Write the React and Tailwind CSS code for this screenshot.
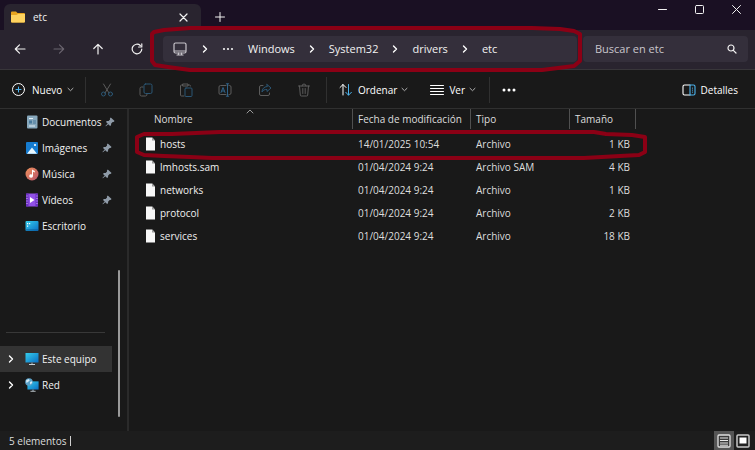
import React from "react";

const line = { fill: "none", stroke: "currentColor", strokeLinecap: "round", strokeLinejoin: "round" };

function Icon({ children, className = "size-[14px]", box = "0 0 14 14", width = 1 }) {
  return (
    <svg aria-hidden="true" viewBox={box} className={`shrink-0 ${className}`} {...line} strokeWidth={width}>
      {children}
    </svg>
  );
}

const Chevron = () => (
  <Icon className="size-[8px] text-white" box="0 0 8 8" width={1.4}>
    <path d="M2.5 1 5.5 4 2.5 7" />
  </Icon>
);
const Down = () => (
  <Icon className="size-[7px] text-[#b0b0b0]" box="0 0 7 7">
    <path d="M1 2.3 3.5 4.7 6 2.3" />
  </Icon>
);
const Pin = () => (
  <svg aria-hidden="true" viewBox="0 0 10 10" className="size-[10px] shrink-0 text-[#8f9ba8]">
    <path d="M5.8.4 9.6 4 8.5 5 7.7 4.9 6.2 6.5 6 8.3 5.1 9 3.3 7.2.9 9.3.4 8.9 2.7 6.6 1 4.9 1.8 4.1 3.6 4 5.1 2.4 4.9 1.4Z" fill="currentColor" />
  </svg>
);
const Separator = () => <span className="h-[26px] w-px shrink-0 bg-[#303030]" />;

const MonitorShape = () => (
  <>
    <path d="M0.5 1h13v9.500H0.5z" fill="url(#screen)" />
    <path d="M6 10.500h2v2H6z" fill="#6b7780" />
    <path d="M4 12h6v1H4z" fill="#c8d0d6" />
  </>
);

function PlaceIcon({ kind }) {
  return (
    <svg aria-hidden="true" viewBox="0 0 14 14" className="size-[14px] shrink-0">
      <defs>
        <linearGradient id="screen" x1="0" y1="0" x2="1" y2="1">
          <stop offset="0" stopColor="#35cdec" />
          <stop offset="1" stopColor="#0a6fc4" />
        </linearGradient>
        <linearGradient id="music" x1="0" y1="0" x2="1" y2="1">
          <stop offset="0" stopColor="#f0925a" />
          <stop offset="1" stopColor="#b8546c" />
        </linearGradient>
      </defs>
      {kind === "doc" && (
        <>
          <rect x="2" y="0.5" width="10.5" height="13" rx="1" fill="#88a9bd" />
          <path d="M4 3h4v1H4zM4 10.500h6v1H4z" fill="#e3f0f7" />
          <path d="M4 5.500h3v3H4zM8 5.500h3v1H8zM8 7.500h3v1H8z" fill="#47799c" />
        </>
      )}
      {kind === "img" && (
        <>
          <rect x="1" y="1" width="12" height="12" rx="1" fill="#167cd0" />
          <path d="M2 12.800 7 6.500l5 6.300Z" fill="#e9f8ff" />
          <circle cx="10" cy="4" r="1.100" fill="#fff" />
        </>
      )}
      {kind === "music" && (
        <>
          <circle cx="7" cy="7" r="6.500" fill="url(#music)" />
          <path d="M7 2.500 9.800 4v1.500L8 4.800V9a1.900 1.700 0 1 1-1-1.500Z" fill="#fff" />
        </>
      )}
      {kind === "video" && (
        <>
          <rect x="1" y="0.500" width="12" height="13" rx="1" fill="#9150e6" />
          <path d="M1 .5h2.500v13H1zM10.500 .5H13v13h-2.500z" fill="#6a2fc0" />
          <path d="M1.500 3h1M1.500 5.500h1M1.500 8h1M1.500 10.500h1M11.500 3h1M11.500 5.500h1M11.500 8h1M11.500 10.500h1" stroke="#d4b8f8" />
          <path d="M5 4 9.500 7 5 10Z" fill="#fff" />
        </>
      )}
      {kind === "desktop" && (
        <>
          <rect x="0.500" y="2" width="13" height="10" rx="1" fill="url(#screen)" />
          <path d="M2 4h1.200v1.200H2zM4 4h1.200v1.200H4zM2 6.500h1.200v1.200H2z" fill="#fff" />
          <path d="M1 10.500h12v1H1z" fill="#0b5c99" />
        </>
      )}
      {kind === "pc" && <MonitorShape />}
      {kind === "net" && (
        <>
          <g transform="translate(2 2.500) scale(.86)">
            <MonitorShape />
          </g>
          <circle cx="4" cy="4" r="3.800" fill="#5aa0c8" />
          <path d="M1 2.500 3.500 1l1.300 1.300-1.500 1.500L1.500 5ZM5 4l2-.8.2 1.800L5.200 6.500Z" fill="#d5ebf5" />
        </>
      )}
    </svg>
  );
}

const FileIcon = () => (
  <svg aria-hidden="true" viewBox="0 0 11 14" className="h-[14px] w-[11px] shrink-0">
    <path d="M1 .5h6.200L10 3.400V13.500H1Z" fill="#f7f7f7" />
    <path d="M7 .5V3.600h3Z" fill="#9a9a9a" />
  </svg>
);

const places = [
  ["doc", "Documentos", true],
  ["img", "Imágenes", true],
  ["music", "Música", true],
  ["video", "Vídeos", true],
  ["desktop", "Escritorio", false],
];

const files = [
  ["hosts", "14/01/2025 10:54", "Archivo", "1 KB"],
  ["lmhosts.sam", "01/04/2024 9:24", "Archivo SAM", "4 KB"],
  ["networks", "01/04/2024 9:24", "Archivo", "1 KB"],
  ["protocol", "01/04/2024 9:24", "Archivo", "2 KB"],
  ["services", "01/04/2024 9:24", "Archivo", "18 KB"],
];

const tools = [
  ["Cortar", <><path d="M3.500 1 9 10M10.500 1 5 10" /><g stroke="#2b5674"><circle cx="3.500" cy="11" r="2" /><circle cx="10.500" cy="11" r="2" /></g></>],
  ["Copiar", <><path d="M4 4H2.500A1.500 1.500 0 0 0 1 5.500v6A1.500 1.500 0 0 0 2.500 13h4A1.500 1.500 0 0 0 8 11.500" /><rect x="5" y="1" width="8" height="9.500" rx="1.500" stroke="#2b5674" /></>],
  ["Pegar", <><path d="M5 13H2.500A1 1 0 0 1 1.500 12V3a1 1 0 0 1 1-1H4M9 2h1.500a1 1 0 0 1 1 1M4 1h5v2H4z" /><rect x="6" y="5" width="7" height="8.500" rx="1" stroke="#2b5674" /></>],
  ["Cambiar nombre", <><path d="M8 2.500H2.500A1.500 1.500 0 0 0 1 4v6a1.500 1.500 0 0 0 1.500 1.500H8M11 2.500h.5A1.500 1.500 0 0 1 13 4v6a1.500 1.500 0 0 1-1.500 1.500H11" /><path d="M3 9.500 5 4.500l2 5M3.800 8h2.400M9.500 1v12M8.300.8h2.400M8.300 13.200h2.400" stroke="#2f6288" /></>],
  ["Compartir", <><path d="M5 2.500H3A1.500 1.500 0 0 0 1.500 4v7A1.500 1.500 0 0 0 3 12.500h7a1.500 1.500 0 0 0 1.500-1.500v-1" /><path d="M9 1.500 13 5 9 8.500V6.500C6.500 6.300 5 7.200 4 9c0-3 2-5.300 5-5.500Z" stroke="#2b5674" /></>],
  ["Eliminar", <path d="M1.500 3h11M5 3a2 2 0 0 1 4 0M2.500 3l.8 9a1 1 0 0 0 1 1h5.400a1 1 0 0 0 1-1l.8-9M5.800 5.500v5M8.200 5.500v5" />],
];

const ring = "pointer-events-none absolute overflow-visible";

function TitleBar() {
  return (
    <header className="flex h-[30px] items-start bg-[#1a1023]">
      <div className="mt-1 ml-1 flex h-[26px] w-[197px] items-center rounded-t-md bg-[#29242f] pr-3 pl-[7px]">
        <svg aria-hidden="true" viewBox="0 0 14 12" className="h-[12px] w-[14px]">
          <path d="M0 1.500Q0 .5 1 .5H5L6.500 2H13q1 0 1 1v7.500q0 1-1 1H1q-1 0-1-1Z" fill="#e9a51f" />
          <path d="M0 4h5.500L7 3h7v7.500q0 1-1 1H1q-1 0-1-1Z" fill="#ffd35f" />
        </svg>
        <span className="ml-2 text-[10px] font-medium">etc</span>
        <button aria-label="Cerrar pestaña" className="ml-auto grid size-[12px] place-items-center">
          <Icon className="size-[9px]" box="0 0 9 9" width={1.2}><path d="M1 1l7 7M8 1 1 8" /></Icon>
        </button>
      </div>
      <button aria-label="Nueva pestaña" className="mt-3 ml-[14px]">
        <Icon className="size-[10px]" box="0 0 10 10"><path d="M5 .5v9M.5 5h9" /></Icon>
      </button>
      <div className="ml-auto flex">
        <button aria-label="Minimizar" className="grid h-[18px] w-[37px] place-items-center">
          <Icon className="size-[9px]" box="0 0 9 9"><path d="M.5 4.500h8" /></Icon>
        </button>
        <button aria-label="Maximizar" className="grid h-[18px] w-[37px] place-items-center">
          <Icon className="size-[9px]" box="0 0 9 9"><rect x=".5" y=".5" width="8" height="8" rx="1" /></Icon>
        </button>
        <button aria-label="Cerrar" className="grid h-[18px] w-[37px] place-items-center">
          <Icon className="size-[9px]" box="0 0 9 9"><path d="M.5.5l8 8M8.500.5l-8 8" /></Icon>
        </button>
      </div>
    </header>
  );
}

function NavBar() {
  const nav = "grid h-[26px] w-[39px] place-items-center";
  return (
    <div className="flex h-[40px] items-start border-b border-[#38363a] bg-[#29242f] pt-[6px] pr-[7px]">
      <button aria-label="Atrás" className={nav}><Icon className="size-[12px]" box="0 0 12 12" width={1.2}><path d="M11 6H1.500M5.500 1.800 1.300 6l4.200 4.200" /></Icon></button>
      <button aria-label="Adelante" className={`${nav} text-[#6b6670]`}><Icon className="size-[12px]" box="0 0 12 12" width={1.1}><path d="M1 6h9.500M6.500 1.800 10.700 6l-4.200 4.200" /></Icon></button>
      <button aria-label="Arriba" className={nav}><Icon className="size-[12px]" box="0 0 12 12" width={1.2}><path d="M6 11V1.500M1.800 5.500 6 1.300l4.200 4.200" /></Icon></button>
      <button aria-label="Actualizar" className={nav}><Icon className="size-[12px]" box="0 0 12 12" width={1.2}><path d="M10.800 6A4.800 4.800 0 1 1 9.300 2.500M10.800.8V4H7.600" /></Icon></button>
      <nav aria-label="Ruta" className="relative ml-[7px] flex h-[26px] flex-1 items-center rounded bg-[#342f3b] pl-[10px] text-[11px] font-medium">
        <a href="#equipo" aria-label="Equipo" className="mr-[14px]">
          <Icon className="size-[14px] text-[#c8c5cb]" width={1.2}><rect x="1" y="1" width="12" height="10" rx="1.500" /><path d="M1.500 9h11M5.500 11v1.700M8.500 11v1.700M4 13h6" /></Icon>
        </a>
        <Chevron />
        <button aria-label="Más carpetas" className="ml-[13px] w-[12px]">
          <svg aria-hidden="true" viewBox="0 0 12 4" className="h-[4px] w-[12px]" fill="currentColor"><circle cx="2" cy="2" r="1.100" /><circle cx="6" cy="2" r="1.100" /><circle cx="10" cy="2" r="1.100" /></svg>
        </button>
        <div className="ml-[14px] flex items-center gap-[13px]">
          <a href="#windows">Windows</a>
          <Chevron />
          <a href="#system32">System32</a>
          <Chevron />
          <a href="#drivers">drivers</a>
          <Chevron />
          <a href="#etc">etc</a>
        </div>
        <svg aria-hidden="true" viewBox="150 26 434 46" preserveAspectRatio="none" className={`${ring} -top-[10px] -left-[13px] h-[46px] w-[calc(100%+20px)]`}>
          <path d="M152 34 154 32 164 30 190 28 532 28 560 29 574 31 580 34 580 61 574 66 558 68 542 70 190 70 168 67 155 65 152 61Z" fill="none" stroke="#8b0015" strokeWidth="4" strokeLinejoin="round" />
        </svg>
      </nav>
      <label className="ml-[6px] flex h-[26px] w-[165px] items-center rounded bg-[#342f3b] pr-[11px] pl-3">
        <input aria-label="Buscar en etc" placeholder="Buscar en etc" className="w-0 flex-1 bg-transparent text-[11px] outline-none placeholder:text-[#c9c6cc]" />
        <Icon className="size-[10px]" box="0 0 10 10" width={1.2}><circle cx="4" cy="4" r="3" /><path d="M6.300 6.300 9 9" /></Icon>
      </label>
    </div>
  );
}

function Toolbar() {
  return (
    <div className="flex h-[38px] items-center bg-[#191919] pt-px pr-[17px] text-white">
      <button className="flex w-[85px] items-center pl-3">
        <Icon className="size-[13px]" box="0 0 13 13"><circle cx="6.500" cy="6.500" r="6" /><path d="M6.500 4v5M4 6.500h5" stroke="#4cb4ee" /></Icon>
        <span className="mr-[5px] ml-[7px]">Nuevo</span>
        <Down />
      </button>
      <Separator />
      <div className="mr-[2px] ml-px flex w-[237px] text-[#5c5c5c]">
        {tools.map(([name, art]) => (
          <button key={name} aria-label={name} disabled className="grid flex-1 place-items-center"><Icon>{art}</Icon></button>
        ))}
      </div>
      <Separator />
      <button className="ml-3 flex items-center">
        <Icon><path d="M4 12V1.500M1 4.500l3-3 3 3" /><path d="M9.500 1.500V12M6.800 9.300l2.700 2.900 2.900-2.900" stroke="#4cb4ee" /></Icon>
        <span className="mr-1 ml-[5px]">Ordenar</span>
        <Down />
      </button>
      <button className="ml-[22px] flex items-center">
        <Icon><path d="M.5 2.500h13M.5 5.500h13M.5 8.500h13M.5 11.500h13" /></Icon>
        <span className="mr-1 ml-[5px]">Ver</span>
        <Down />
      </button>
      <span className="w-[13px]" />
      <Separator />
      <button aria-label="Ver más" className="ml-3">
        <svg aria-hidden="true" viewBox="0 0 14 4" className="h-[4px] w-[14px]" fill="currentColor"><circle cx="2" cy="2" r="1.500" /><circle cx="7" cy="2" r="1.500" /><circle cx="12" cy="2" r="1.500" /></svg>
      </button>
      <button className="ml-auto flex items-center gap-[5px]">
        <Icon width={1.1}><path d="M8 2H2.500A1.500 1.500 0 0 0 1 3.500v7A1.500 1.500 0 0 0 2.500 12H8" /><path d="M8 2h3.500A1.500 1.500 0 0 1 13 3.500v7a1.500 1.500 0 0 1-1.500 1.500H8ZM10.500 5v.1M10.500 7v.1M10.500 9v.1" stroke="#4cb4ee" /></Icon>
        Detalles
      </button>
    </div>
  );
}

function Sidebar() {
  return (
    <aside className="flex w-[129px] shrink-0 border-r-2 border-[#2a2a2a]">
      <nav aria-label="Ubicaciones" className="flex w-[112px] flex-col pb-[33px]">
        {places.map(([kind, name, pinned]) => (
          <a key={name} href={`#${kind}`} className="flex h-[26px] items-center gap-[3px] pl-[25px]">
            <PlaceIcon kind={kind} />
            <span className="flex-1 whitespace-nowrap">{name}</span>
            {pinned && <Pin />}
          </a>
        ))}
        <hr className="mt-auto mr-[7px] mb-[13px] ml-[6px] border-[#383838]" />
        {[["pc", "Este equipo", "bg-[#333333]"], ["net", "Red", ""]].map(([kind, name, tone]) => (
          <a key={name} href={`#${kind}`} className={`flex h-[26px] items-center pl-[7px] ${tone}`}>
            <Chevron />
            <span className="ml-[10px] flex items-center gap-[3px]"><PlaceIcon kind={kind} />{name}</span>
          </a>
        ))}
      </nav>
      <div className="mb-[14px] ml-[6px] h-[147px] w-[2px] self-end rounded bg-[#9a9a9a]" />
    </aside>
  );
}

function FileList() {
  const head = "p-0 pb-[3px] text-left font-normal text-[#dedede]";
  const label = "flex h-[20px] items-center border-r border-[#505050] pl-[5px]";
  return (
    <main className="flex-1">
      <div className="relative w-[507px]">
        <table className="w-full table-fixed border-collapse">
          <colgroup>
            <col />
            <col className="w-[118px]" />
            <col className="w-[99px]" />
            <col className="w-[66px]" />
          </colgroup>
          <thead>
            <tr>
              <th className={head}>
                <div className="relative flex h-[20px] items-center border-r border-[#505050] pl-[25px]">
                  Nombre
                  <Icon className="absolute top-0 left-[117px] size-[8px] text-[#9a9a9a]" box="0 0 8 8"><path d="M1 4 4 1l3 3" /></Icon>
                </div>
              </th>
              <th className={head}><div className={label}>Fecha de modificación</div></th>
              <th className={head}><div className={label}>Tipo</div></th>
              <th className={head}><div className={label}>Tamaño</div></th>
            </tr>
          </thead>
          <tbody>
            {files.map(([name, date, type, size]) => (
              <tr key={name} className="h-[23px] text-[#dedede]">
                <td className="p-0 pl-4"><span className="flex items-center gap-1 text-[#f0f0f0]"><FileIcon />{name}</span></td>
                <td className="p-0 pl-[5px]">{date}</td>
                <td className="p-0 pl-[5px]">{type}</td>
                <td className="p-0 pr-[6px] text-right">{size}</td>
              </tr>
            ))}
          </tbody>
        </table>
        <svg aria-hidden="true" viewBox="134 128 514 32" className={`${ring} top-[20px] left-[5px] h-[32px] w-[514px]`}>
          <path d="M137 136 144 133 172 133 220 131 594 131 606 133 632 134 645 136 645 151 639 154 620 155 584 157 212 157 190 156 164 155 144 154 137 151Z" fill="none" stroke="#8b0015" strokeWidth="4" strokeLinejoin="round" />
        </svg>
      </div>
    </main>
  );
}

export default function App() {
  return (
    <div className="flex h-screen min-h-[380px] flex-col overflow-hidden bg-[#191919] font-['Open_Sans','Noto_Sans',sans-serif] text-[10px] leading-[14px] text-[#f2f2f2]">
      <TitleBar />
      <NavBar />
      <Toolbar />
      <div className="flex flex-1 border-t border-[#303030]">
        <Sidebar />
        <FileList />
      </div>
      <footer className="flex h-[19px] items-center bg-[#1d1d1d] pl-[9px] text-[#dedede]">
        5 elementos
        <span className="ml-1 h-[10px] w-px bg-[#d0d0d0]" />
        <div className="ml-auto flex items-center self-stretch">
          <button aria-label="Vista de detalles" className="grid h-full w-[20px] place-items-center bg-[#555555]">
            <svg aria-hidden="true" viewBox="0 0 14 14" className="size-[14px]"><rect x="1" y="1" width="12" height="12" rx="1" fill="#3a3a3a" stroke="#e0e0e0" strokeWidth="1.300" /><path d="M3 4h8M3 6.500h8M3 9h8M3 11.200h8" stroke="#e8e8e8" /></svg>
          </button>
          <button aria-label="Vista de iconos" className="grid h-full w-[21px] place-items-center pr-[3px]">
            <svg aria-hidden="true" viewBox="0 0 14 14" className="size-[14px]"><rect x="1" y="1" width="12" height="12" rx="1" fill="#222222" stroke="#c8c8c8" strokeWidth="1.500" /><path d="M3.500 3.500h7v6h-7z" fill="#fff" /></svg>
          </button>
        </div>
      </footer>
    </div>
  );
}
